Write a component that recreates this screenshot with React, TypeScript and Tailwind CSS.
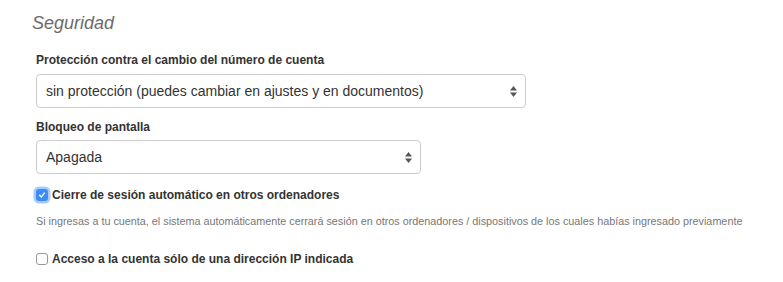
function SelectBox({ value, width }: { value: string; width: string }) {
  return (
    <div
      className={`${width} flex h-[34px] items-center justify-between rounded-[4px] border border-[#cccccc] bg-white pl-[9px] pr-[8px] text-[14px] text-[#333]`}
    >
      <span>{value}</span>
      <svg width="7" height="11" viewBox="0 0 7 11">
        <path d="M3.5 0 L7 4.5 L0 4.5 Z" fill="#555" />
        <path d="M3.5 11 L7 6.5 L0 6.5 Z" fill="#555" />
      </svg>
    </div>
  );
}

function Check({ checked }: { checked: boolean }) {
  if (checked) {
    return (
      <span className="flex h-[12px] w-[12px] shrink-0 items-center justify-center rounded-[3px] bg-[#3b8df5] shadow-[0_0_0_2.5px_rgba(96,160,245,0.55)]">
        <svg width="8" height="8" viewBox="0 0 10 10">
          <path d="M2 5.2 L4.2 7.4 L8 2.6" stroke="white" strokeWidth="1.7" fill="none" strokeLinecap="round" />
        </svg>
      </span>
    );
  }
  return <span className="h-[12px] w-[12px] shrink-0 rounded-[3px] border border-[#999] bg-white" />;
}

export default function App() {
  return (
    <div className="min-h-screen bg-white font-['Liberation_Sans',Arial,sans-serif] text-[#333]">
      <div className="pl-[32px] pt-[12px]">
        <h2 className="text-[18px] italic leading-[22px] text-[#6b6b6b]">Seguridad</h2>
      </div>
      <div className="pl-[36px] pt-[18px]">
        <div className="text-[12px] font-bold leading-[16px]">Protección contra el cambio del número de cuenta</div>
        <div className="pt-[6px]">
          <SelectBox value="sin protección (puedes cambiar en ajustes y en documentos)" width="w-[490px]" />
        </div>
        <div className="pt-[11px] text-[12px] font-bold leading-[16px]">Bloqueo de pantalla</div>
        <div className="pt-[5px]">
          <SelectBox value="Apagada" width="w-[385px]" />
        </div>
        <label className="mt-[13px] flex items-center gap-[4px] text-[12px] font-bold leading-[16px]">
          <Check checked />
          <span>Cierre de sesión automático en otros ordenadores</span>
        </label>
        <p className="pt-[11px] text-[10.8px] leading-[14px] text-[#777]">
          Si ingresas a tu cuenta, el sistema automáticamente cerrará sesión en otros ordenadores / dispositivos de los cuales habías ingresado previamente
        </p>
        <label className="mt-[23px] flex items-center gap-[4px] text-[12px] font-bold leading-[16px]">
          <Check checked={false} />
          <span>Acceso a la cuenta sólo de una dirección IP indicada</span>
        </label>
      </div>
    </div>
  );
}
